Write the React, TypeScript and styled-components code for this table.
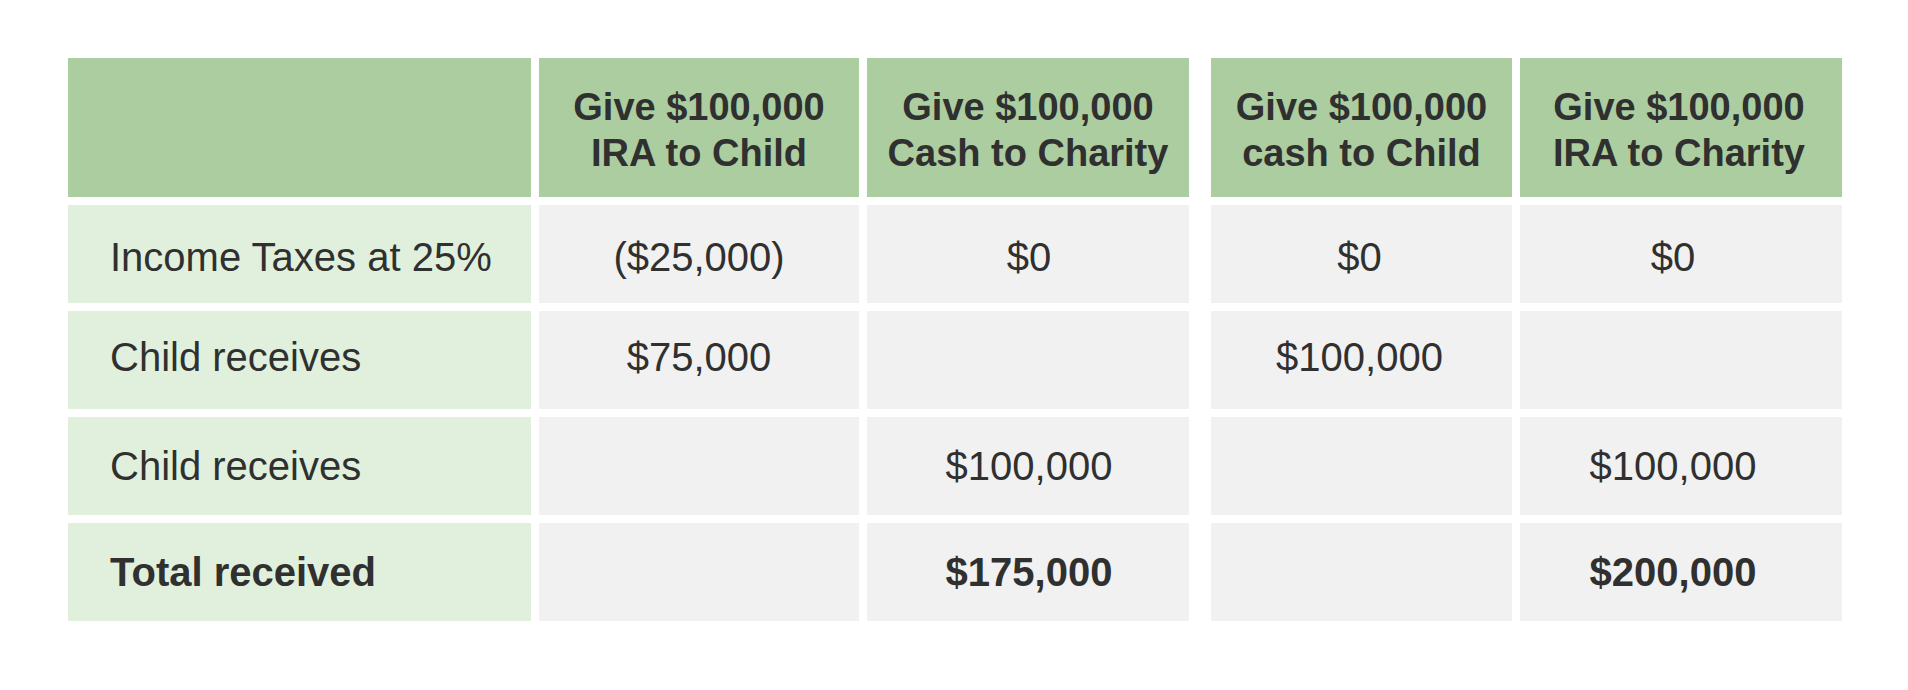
import React from "react";
import styled, { createGlobalStyle } from "styled-components";

const Global = createGlobalStyle`
  html, body {
    margin: 0;
    padding: 0;
    background: #ffffff;
  }
  body {
    font-family: "Liberation Sans", Arial, sans-serif;
    color: #2f302f;
  }
`;

const Page = styled.div`
  padding: 58px 0 0 68px;
  width: 1908px;
  height: 690px;
  box-sizing: border-box;
`;

const Table = styled.div`
  display: flex;
  flex-direction: column;
  gap: 8px;
`;

const Row = styled.div<{ $header?: boolean }>`
  display: flex;
  gap: 8px;
  height: ${(p) => (p.$header ? "139px" : "98px")};
`;

type Kind = "head" | "label" | "data";

const bg: Record<Kind, string> = {
  head: "#abcd9f",
  label: "#e1f0dc",
  data: "#f1f1f1",
};

const Cell = styled.div<{
  $w: number;
  $kind: Kind;
  $extra?: number;
  $bold?: boolean;
  $shift?: number;
  $nudge?: number;
}>`
  width: ${(p) => p.$w}px;
  flex: none;
  margin-left: ${(p) => p.$extra ?? 0}px;
  background: ${(p) => bg[p.$kind]};
  display: flex;
  align-items: center;
  justify-content: ${(p) => (p.$kind === "label" ? "flex-start" : "center")};
  padding-left: ${(p) => (p.$kind === "label" ? 42 : Math.max(0, (p.$nudge ?? 0) * 2))}px;
  padding-right: ${(p) => (p.$kind === "label" ? 0 : Math.max(0, -(p.$nudge ?? 0) * 2))}px;
  padding-top: ${(p) => Math.max(0, (p.$shift ?? 0) * 2)}px;
  padding-bottom: ${(p) => Math.max(0, -(p.$shift ?? 0) * 2)}px;
  box-sizing: border-box;
  text-align: center;
  font-size: ${(p) => (p.$kind === "head" ? "38px" : "40px")};
  font-weight: ${(p) => (p.$kind === "head" || p.$bold ? 700 : 400)};
  line-height: 46px;
  color: #2f302f;
`;

const cols = [
  { w: 463, extra: 0, nudge: 0 },
  { w: 320, extra: 0, nudge: 0 },
  { w: 322, extra: 0, nudge: 1 },
  { w: 301, extra: 14, nudge: -2 },
  { w: 322, extra: 0, nudge: -8 },
];

const headers = [
  "",
  "Give $100,000\nIRA to Child",
  "Give $100,000\nCash to Charity",
  "Give $100,000\ncash to Child",
  "Give $100,000\nIRA to Charity",
];

const rows: { cells: string[]; bold?: boolean; shift: number }[] = [
  { cells: ["Income Taxes at 25%", "($25,000)", "$0", "$0", "$0"], shift: 3 },
  { cells: ["Child receives", "$75,000", "", "$100,000", ""], shift: -3 },
  { cells: ["Child receives", "", "$100,000", "", "$100,000"], shift: 0 },
  { cells: ["Total received", "", "$175,000", "", "$200,000"], bold: true, shift: 0 },
];

const Lines = styled.span`
  white-space: pre-line;
`;

export default function App() {
  return (
    <>
      <Global />
      <Page>
        <Table>
          <Row $header>
            {headers.map((h, i) => (
              <Cell
                key={i}
                $w={cols[i].w}
                $extra={cols[i].extra}
                $kind="head"
                $shift={2}
                $nudge={i === 4 ? -2 : 0}
              >
                <Lines>{h}</Lines>
              </Cell>
            ))}
          </Row>
          {rows.map((r, ri) => (
            <Row key={ri}>
              {r.cells.map((c, i) => (
                <Cell
                  key={i}
                  $w={cols[i].w}
                  $extra={cols[i].extra}
                  $kind={i === 0 ? "label" : "data"}
                  $bold={r.bold}
                  $shift={r.shift}
                  $nudge={cols[i].nudge}
                >
                  {c}
                </Cell>
              ))}
            </Row>
          ))}
        </Table>
      </Page>
    </>
  );
}
